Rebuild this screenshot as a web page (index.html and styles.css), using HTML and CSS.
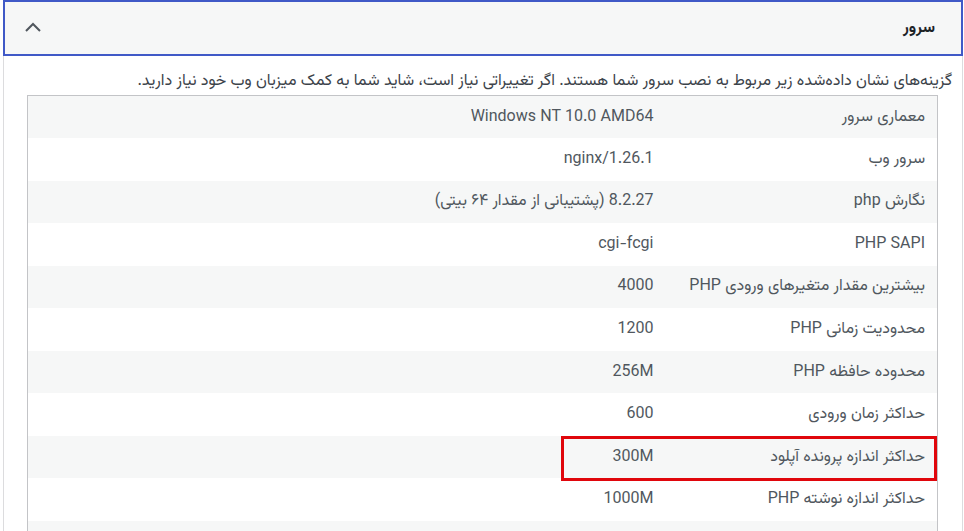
FILE: index.html
```html
<!DOCTYPE html>
<html lang="fa" dir="rtl">
<head>
<meta charset="utf-8">
<link rel="stylesheet" href="styles.css">
</head>
<body>
<div class="panel">
  <div class="panel-head">
    <span class="title">سرور</span>
    <svg class="chev" width="18" height="12" viewBox="0 0 18 12"><path d="M2 10 L9 3 L16 10" fill="none" stroke="#50575e" stroke-width="2"/></svg>
  </div>
  <div class="panel-body">
    <p class="intro">گزینه‌های نشان داده‌شده زیر مربوط به نصب سرور شما هستند. اگر تغییراتی نیاز است، شاید شما به کمک میزبان وب خود نیاز دارید.</p>
    <div class="table-wrap">
      <table class="info">
        <tr><td class="label">معماری سرور</td><td class="value" dir="ltr">Windows NT 10.0 AMD64</td></tr>
        <tr><td class="label">سرور وب</td><td class="value" dir="ltr">nginx/1.26.1</td></tr>
        <tr><td class="label">نگارش php</td><td class="value">8.2.27 (پشتیبانی از مقدار ۶۴ بیتی)</td></tr>
        <tr><td class="label">PHP SAPI</td><td class="value" dir="ltr">cgi-fcgi</td></tr>
        <tr><td class="label">بیشترین مقدار متغیرهای ورودی PHP</td><td class="value">4000</td></tr>
        <tr><td class="label">محدودیت زمانی PHP</td><td class="value">1200</td></tr>
        <tr><td class="label">محدوده حافظه PHP</td><td class="value">256M</td></tr>
        <tr><td class="label">حداکثر زمان ورودی</td><td class="value">600</td></tr>
        <tr><td class="label">حداکثر اندازه پرونده آپلود</td><td class="value">300M</td></tr>
        <tr><td class="label">حداکثر اندازه نوشته PHP</td><td class="value">1000M</td></tr>
        <tr><td class="label">&nbsp;</td><td class="value">&nbsp;</td></tr>
      </table>
      <div class="highlight"></div>
    </div>
  </div>
</div>
</body>
</html>
```
FILE: styles.css
```css
html, body {
  margin: 0;
  padding: 0;
  background: #fff;
  overflow: hidden;
}
body {
  font-family: Vazirmatn, Roboto, "Noto Sans Arabic", "DejaVu Sans", sans-serif;
  color: #3c434a;
  height: 531px;
}
.panel {
  margin: 0 1px 0 3px;
  border-left: 1px solid #dcdcde;
  border-right: 1px solid #dcdcde;
  height: 531px;
  box-sizing: border-box;
}
.panel-head {
  height: 56px;
  box-sizing: border-box;
  margin: 0 -1px;
  border: 2px solid #4059c7;
  background: #f6f7f7;
  display: flex;
  align-items: center;
  justify-content: space-between;
  padding: 0 26px 0 19px;
}
.title {
  font-size: 16px;
  font-weight: bold;
  color: #1d2327;
}
.chev {
  display: block;
  margin-top: -3px;
}
.panel-body {
  padding: 14px 10px 0 23px;
}
.intro {
  margin: 0 0 1px 0;
  font-size: 16px;
  line-height: 24px;
  color: #3c434a;
}
.table-wrap {
  position: relative;
  margin-right: 14px;
}
.info {
  width: 100%;
  border-collapse: collapse;
  border: 1px solid #c3c4c7;
  font-size: 16px;
  color: #50575e;
}
.info tr:nth-child(odd) td {
  background: #f6f7f7;
}
.info td {
  height: 42.56px;
  padding: 0 12px;
  box-sizing: border-box;
  text-align: right;
  vertical-align: middle;
}
.info td.label {
  width: 272px;
}
.highlight {
  position: absolute;
  top: 341px;
  left: 534px;
  width: 376px;
  height: 45px;
  border: 3px solid #e0060c;
  box-sizing: border-box;
}
```
